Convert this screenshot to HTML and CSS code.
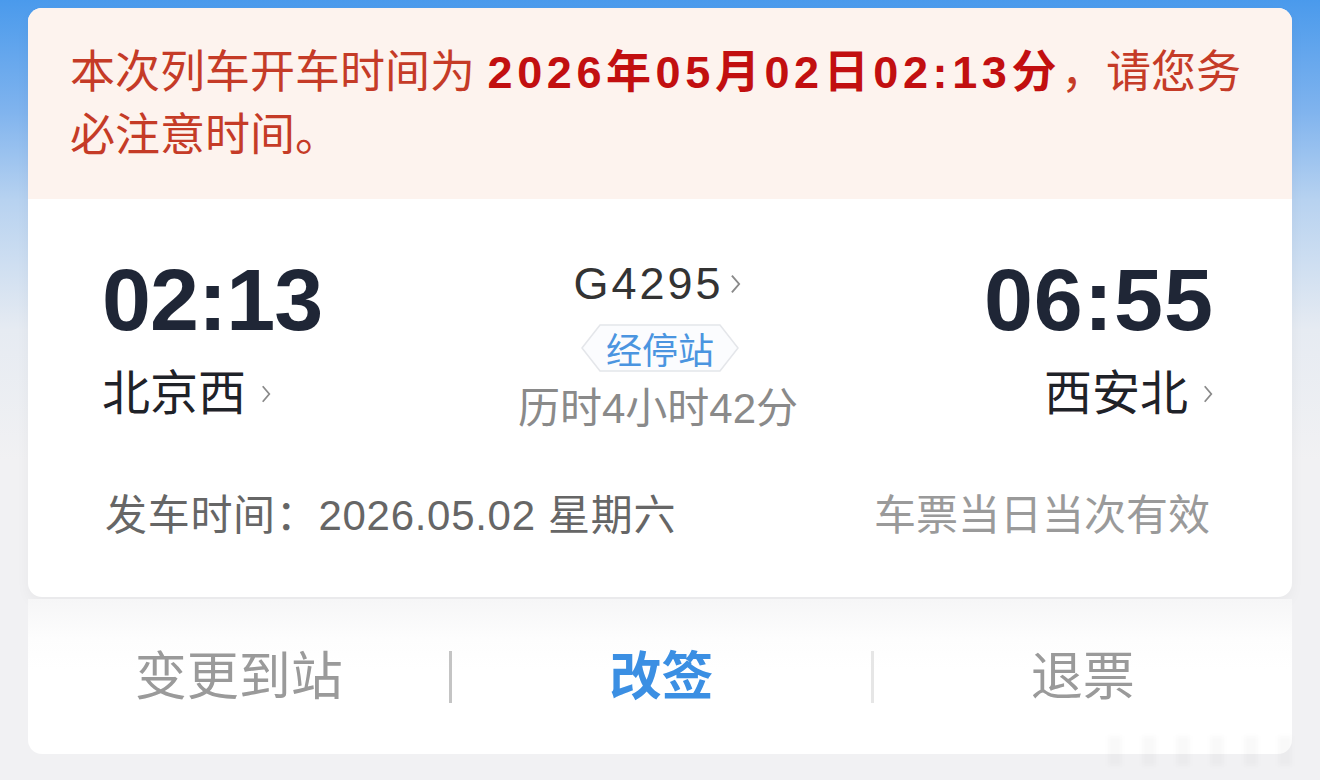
FILE: index.html
```html
<!DOCTYPE html>
<html lang="zh-CN">
  <head>
    <meta charset="utf-8" />
    <title>车票详情</title>
    <meta name="viewport" content="width=device-width, initial-scale=1" />
    <link rel="stylesheet" href="styles.css">
  </head>

  <body>
    <div class="page">
      <div class="ticket">
        <div class="notice">
          本次列车开车时间为 <b>2026年05月02日02:13分</b>，请您务必注意时间。
        </div>

        <div class="trip">
          <div class="end">
            <div class="time">02:13</div>
            <div class="station">北京西<svg class="chev" viewBox="0 0 10 20"><polyline points="2,3 8,10 2,17" /></svg></div>
          </div>

          <div class="mid">
            <div class="train">G4295<svg class="chev" viewBox="0 0 10 20"><polyline points="2,3 8,10 2,17" /></svg></div>
            <div class="stops">
              <svg class="hex" viewBox="0 0 158 48" preserveAspectRatio="none">
                <polygon points="1,24 19,1 139,1 157,24 139,47 19,47" />
              </svg>
              <span>经停站</span>
            </div>
            <div class="duration">历时4小时42分</div>
          </div>

          <div class="end right">
            <div class="time">06:55</div>
            <div class="station">西安北<svg class="chev" viewBox="0 0 10 20"><polyline points="2,3 8,10 2,17" /></svg></div>
          </div>
        </div>

        <div class="meta">
          <div class="date">发车时间：2026.05.02 星期六</div>
          <div class="valid">车票当日当次有效</div>
        </div>
      </div>

      <div class="actions">
        <div class="action">变更到站</div>
        <div class="action primary">改签</div>
        <div class="action">退票</div>
      </div>
    </div>

    <div class="mark"></div>
  </body>
</html>
```

FILE: styles.css
```css
/* Page */

html,
body {
  margin: 0;
  height: 100%;
}

body {
  font-family: "Liberation Sans", "Noto Sans CJK SC", sans-serif;
  background: linear-gradient(
    #4a9aec 0,
    #7fb3ee 110px,
    #b7d2f0 200px,
    #e6ebf2 330px,
    #f1f1f3 460px
  );
  overflow: hidden;
  position: relative;
}

.page {
  padding: 8px 28px 0 28px;
}

/* Ticket card */

.ticket {
  background: #fff;
  border-radius: 14px;
  overflow: hidden;
  box-shadow: 0 6px 14px rgba(0, 0, 0, 0.04);
}

.notice {
  background: #fdf3ee;
  color: #c53b27;
  font-size: 45px;
  line-height: 63px;
  padding: 33px 44px 32px 42px;
}

.notice b {
  color: #c20f10;
  font-weight: bold;
  letter-spacing: 4.6px;
}

.trip {
  display: grid;
  grid-template-columns: 1fr 340px 1fr;
  padding: 57px 78px 0 74px;
  align-items: start;
}

.end .time {
  font-size: 88px;
  line-height: 88px;
  font-weight: bold;
  color: #1f2636;
  letter-spacing: -1px;
}

.end .station {
  margin-top: 22px;
  font-size: 48px;
  line-height: 56px;
  color: #1f2228;
  display: flex;
  align-items: center;
}

.end.right {
  display: flex;
  flex-direction: column;
  align-items: flex-end;
}

.end.right .time {
  letter-spacing: 1px;
}

.chev {
  width: 12px;
  height: 22px;
  margin-left: 14px;
}

.chev polyline {
  fill: none;
  stroke: #8a8a8a;
  stroke-width: 1.6;
}

.mid {
  display: flex;
  flex-direction: column;
  align-items: center;
  padding-top: 2px;
}

.train {
  font-size: 45px;
  line-height: 52px;
  color: #333;
  letter-spacing: 3px;
  display: flex;
  align-items: center;
  margin-left: 0;
}

.train .chev {
  margin-left: 4px;
  width: 15px;
  height: 24px;
}

.stops {
  position: relative;
  width: 158px;
  height: 48px;
  margin-top: 14px;
  display: flex;
  align-items: center;
  justify-content: center;
  margin-left: 4px;
}

.stops .hex {
  position: absolute;
  left: 0;
  top: 0;
  width: 100%;
  height: 100%;
}

.stops .hex polygon {
  fill: #fbfcfe;
  stroke: #e4e6ea;
  stroke-width: 1.5;
}

.stops span {
  position: relative;
  font-size: 36px;
  color: #4b95e0;
}

.duration {
  margin-top: 14px;
  font-size: 42px;
  line-height: 46px;
  color: #8a8a8a;
}

.meta {
  display: flex;
  justify-content: space-between;
  padding: 61px 82px 58px 77px;
  font-size: 42px;
  line-height: 46px;
}

.meta .date {
  color: #666;
  letter-spacing: 0.7px;
}

.meta .valid {
  color: #9a9a9a;
}

/* Bottom actions */

.actions {
  margin-top: 2px;
  height: 155px;
  background: linear-gradient(#f6f6f7 0, #fdfdfd 40px, #fff 70px);
  border-radius: 0 0 14px 14px;
  display: grid;
  grid-template-columns: 1fr 1fr 1fr;
  align-items: center;
}

.action {
  text-align: center;
  font-size: 52px;
  line-height: 52px;
  color: #9a9a9a;
  border-left: 3px solid #e6e6e6;
}

.action:first-child {
  border-left: none;
}

.action:nth-child(2) {
  border-left-color: #c4c4c4;
}

.action.primary {
  color: #3b8fe3;
  font-weight: bold;
}

/* Faint watermark bottom right */

.mark {
  position: absolute;
  right: 12px;
  bottom: 14px;
  width: 200px;
  height: 30px;
  background: repeating-linear-gradient(
    90deg,
    rgba(0, 0, 0, 0.025) 0,
    rgba(0, 0, 0, 0.025) 14px,
    transparent 14px,
    transparent 34px
  );
  filter: blur(2px);
}
```
